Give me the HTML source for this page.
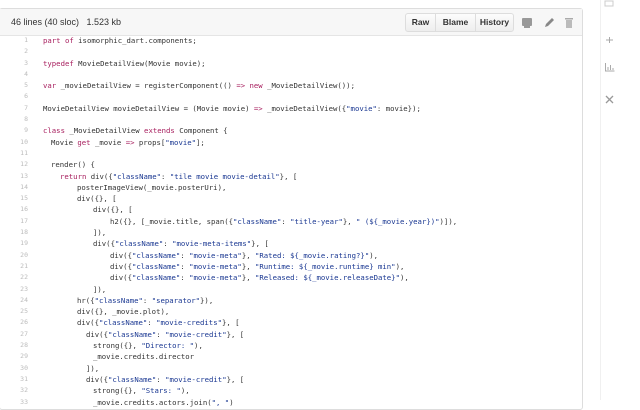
<!DOCTYPE html>
<html><head><meta charset="utf-8"><style>
body{margin:0;width:640px;height:400px;overflow:hidden;background:#fff;font-family:"Liberation Sans",sans-serif;position:relative}
.box{position:absolute;left:-1px;top:8px;width:582px;height:400px;border:1px solid #ddd;border-radius:3px}
.hd{height:26px;background:#f7f7f7;border-bottom:1px solid #e5e5e5;font-size:9px;color:#333;line-height:26px;padding-left:11px;position:relative}
.btns{position:absolute;left:405px;top:4px;height:17px;display:flex;border:1px solid #ddd;border-radius:3px;background:linear-gradient(#fcfcfc,#eee)}
.btns div{font-weight:bold;font-size:8.5px;line-height:17px;text-align:center;border-left:1px solid #ddd}
.btns div:first-child{border-left:none}
.code{position:absolute;left:0;top:35px;font-family:"DejaVu Sans Mono","Liberation Mono",monospace;font-size:7.3px;color:#333}
.l{height:11.3px;line-height:11.3px;white-space:pre;position:relative}
.n{position:absolute;left:0;width:28px;text-align:right;color:#bbb;font-size:6.5px}
.c{position:absolute;left:43px}
.k{color:#a71d5d}.s{color:#183691}
.side{position:absolute;left:600px;top:0;width:1px;height:400px;background:#f0f0f0}
</style></head><body>
<div class="box"><div class="hd">46 lines (40 sloc) &nbsp; 1.523 kb
<div class="btns"><div style="width:29px">Raw</div><div style="width:39px">Blame</div><div style="width:37px">History</div></div>
<svg style="position:absolute;left:521px;top:7px" width="60" height="14"><rect x="1" y="2" width="10" height="8" rx="1" fill="#999"/><rect x="3" y="10" width="6" height="2" fill="#999"/><path d="M24 11l1-3 6-6 2 2-6 6z" fill="#888"/><rect x="44" y="2" width="8" height="1.5" fill="#aaa"/><rect x="45" y="4" width="6" height="8" fill="#bbb"/></svg>
</div></div>
<div class="code">
<div class="l"><span class="n">1</span><span class="c"><span class="k">part of</span> isomorphic_dart.components;</span></div>
<div class="l"><span class="n">2</span></div>
<div class="l"><span class="n">3</span><span class="c"><span class="k">typedef</span> MovieDetailView(Movie movie);</span></div>
<div class="l"><span class="n">4</span></div>
<div class="l"><span class="n">5</span><span class="c"><span class="k">var</span> _movieDetailView = registerComponent(() <span class="k">=&gt;</span> <span class="k">new</span> _MovieDetailView());</span></div>
<div class="l"><span class="n">6</span></div>
<div class="l"><span class="n">7</span><span class="c">MovieDetailView movieDetailView = (Movie movie) <span class="k">=&gt;</span> _movieDetailView({<span class="s">"movie"</span>: movie});</span></div>
<div class="l"><span class="n">8</span></div>
<div class="l"><span class="n">9</span><span class="c"><span class="k">class</span> _MovieDetailView <span class="k">extends</span> Component {</span></div>
<div class="l"><span class="n">10</span><span class="c" style="left:51px">Movie <span class="k">get</span> _movie <span class="k">=&gt;</span> props[<span class="s">"movie"</span>];</span></div>
<div class="l"><span class="n">11</span></div>
<div class="l"><span class="n">12</span><span class="c" style="left:51px">render() {</span></div>
<div class="l"><span class="n">13</span><span class="c" style="left:60px"><span class="k">return</span> div({<span class="s">"className"</span>: <span class="s">"tile movie movie-detail"</span>}, [</span></div>
<div class="l"><span class="n">14</span><span class="c" style="left:77px">posterImageView(_movie.posterUri),</span></div>
<div class="l"><span class="n">15</span><span class="c" style="left:77px">div({}, [</span></div>
<div class="l"><span class="n">16</span><span class="c" style="left:93px">div({}, [</span></div>
<div class="l"><span class="n">17</span><span class="c" style="left:110px">h2({}, [_movie.title, span({<span class="s">"className"</span>: <span class="s">"title-year"</span>}, <span class="s">" (${_movie.year})"</span>)]),</span></div>
<div class="l"><span class="n">18</span><span class="c" style="left:93px">]),</span></div>
<div class="l"><span class="n">19</span><span class="c" style="left:93px">div({<span class="s">"className"</span>: <span class="s">"movie-meta-items"</span>}, [</span></div>
<div class="l"><span class="n">20</span><span class="c" style="left:110px">div({<span class="s">"className"</span>: <span class="s">"movie-meta"</span>}, <span class="s">"Rated: ${_movie.rating?}"</span>),</span></div>
<div class="l"><span class="n">21</span><span class="c" style="left:110px">div({<span class="s">"className"</span>: <span class="s">"movie-meta"</span>}, <span class="s">"Runtime: ${_movie.runtime} min"</span>),</span></div>
<div class="l"><span class="n">22</span><span class="c" style="left:110px">div({<span class="s">"className"</span>: <span class="s">"movie-meta"</span>}, <span class="s">"Released: ${_movie.releaseDate}"</span>),</span></div>
<div class="l"><span class="n">23</span><span class="c" style="left:93px">]),</span></div>
<div class="l"><span class="n">24</span><span class="c" style="left:77px">hr({<span class="s">"className"</span>: <span class="s">"separator"</span>}),</span></div>
<div class="l"><span class="n">25</span><span class="c" style="left:77px">div({}, _movie.plot),</span></div>
<div class="l"><span class="n">26</span><span class="c" style="left:77px">div({<span class="s">"className"</span>: <span class="s">"movie-credits"</span>}, [</span></div>
<div class="l"><span class="n">27</span><span class="c" style="left:86px">div({<span class="s">"className"</span>: <span class="s">"movie-credit"</span>}, [</span></div>
<div class="l"><span class="n">28</span><span class="c" style="left:93px">strong({}, <span class="s">"Director: "</span>),</span></div>
<div class="l"><span class="n">29</span><span class="c" style="left:93px">_movie.credits.director</span></div>
<div class="l"><span class="n">30</span><span class="c" style="left:86px">]),</span></div>
<div class="l"><span class="n">31</span><span class="c" style="left:86px">div({<span class="s">"className"</span>: <span class="s">"movie-credit"</span>}, [</span></div>
<div class="l"><span class="n">32</span><span class="c" style="left:93px">strong({}, <span class="s">"Stars: "</span>),</span></div>
<div class="l"><span class="n">33</span><span class="c" style="left:93px">_movie.credits.actors.join(<span class="s">", "</span>)</span></div>
</div>
<div class="side"></div>
<svg style="position:absolute;left:603px;top:0" width="14" height="110"><rect x="2" y="1" width="8" height="5" fill="none" stroke="#ccc"/><path d="M3 40h7M6.5 37v6" stroke="#aaa"/><path d="M2.5 63v8h9M5 70v-3M7.5 70v-5M10 70v-2" stroke="#aaa" fill="none"/><path d="M3 96l7 7M10 96l-7 7" stroke="#999" stroke-width="1.3"/></svg>
</body></html>
